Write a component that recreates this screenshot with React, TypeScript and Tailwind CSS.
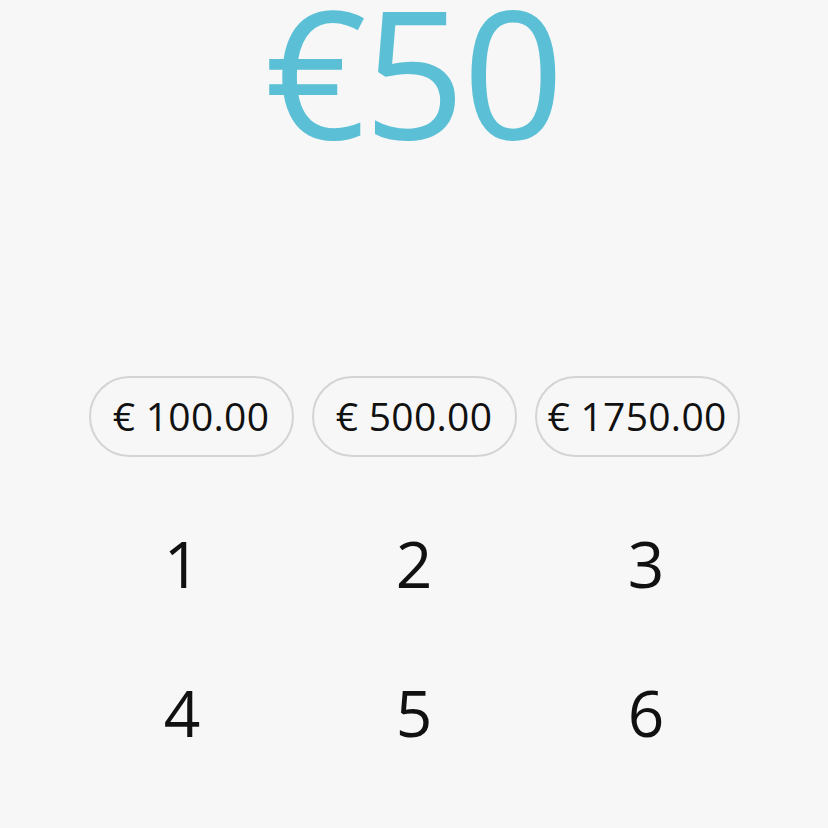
const presets = ['€ 100.00', '€ 500.00', '€ 1750.00'];
const keys = ['1', '2', '3', '4', '5', '6'];

export default function App() {
  return (
    <div
      className="min-h-[828px] w-full bg-[#f7f7f7] overflow-hidden"
      style={{ fontFamily: '"Open Sans", "Noto Sans", sans-serif' }}
    >
      {/* Amount */}
      <div className="text-center text-[178px] leading-[140px] tracking-[-3px] text-[#5bc0d6] pr-[2px]">€50</div>

      {/* Preset amounts */}
      <div className="mt-[236px] flex justify-center gap-[18px]">
        {presets.map((p) => (
          <button
            key={p}
            className="h-[81px] w-[205px] rounded-full border-2 border-[#d4d4d4] flex items-center justify-center text-[39px] tracking-[0.3px] text-[#111] whitespace-nowrap"
          >
            {p}
          </button>
        ))}
      </div>

      {/* Keypad */}
      <div className="mt-[32px] mx-[66px] grid grid-cols-3">
        {keys.map((k) => (
          <button key={k} className="h-[149px] flex items-center justify-center text-[64px] text-[#111]">
            {k}
          </button>
        ))}
      </div>
    </div>
  );
}
